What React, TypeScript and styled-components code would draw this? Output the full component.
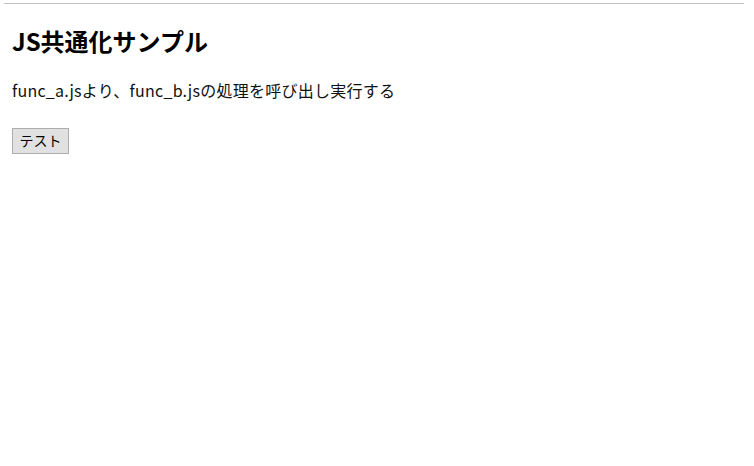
import styled, { createGlobalStyle } from 'styled-components';

const GlobalStyle = createGlobalStyle`
  html, body {
    margin: 0;
    padding: 0;
    background: #fff;
  }
  body {
    font-family: "Noto Sans CJK JP", "Noto Sans", sans-serif;
    color: #000;
  }
`

const Pagina = styled.main`
  width: 740px;
  height: 458px;
  margin: 3px 0 0 4px;
  border-top: 1px solid #c2c2c2;
  box-sizing: border-box;
  padding: 0 8px;
`

const Titulo = styled.h1`
  font-size: 24px;
  font-weight: bold;
  line-height: 35px;
  margin: 19px 0 0;
`

const Texto = styled.p`
  font-size: 16px;
  line-height: 23px;
  letter-spacing: 0.25px;
  margin: 21px 0 0;
  color: #111;
`

const Botao = styled.button`
  display: block;
  margin-top: 26px;
  width: 57px;
  height: 26px;
  padding: 0 0 2px;
  font-family: "Noto Sans CJK JP", sans-serif;
  font-size: 14px;
  color: #000;
  background: #e1e1e1;
  border: 1px solid #adadad;
  border-radius: 0;
  cursor: pointer;
  &:hover {
    background: #e5f1fb;
    border-color: #0078d7;
  }
`

export default function App() {
  return (
    <>
      <GlobalStyle />
      <Pagina>
        <Titulo>JS共通化サンプル</Titulo>
        <Texto>func_a.jsより、func_b.jsの処理を呼び出し実行する</Texto>
        <Botao type='button'>テスト</Botao>
      </Pagina>
    </>
  )
}
